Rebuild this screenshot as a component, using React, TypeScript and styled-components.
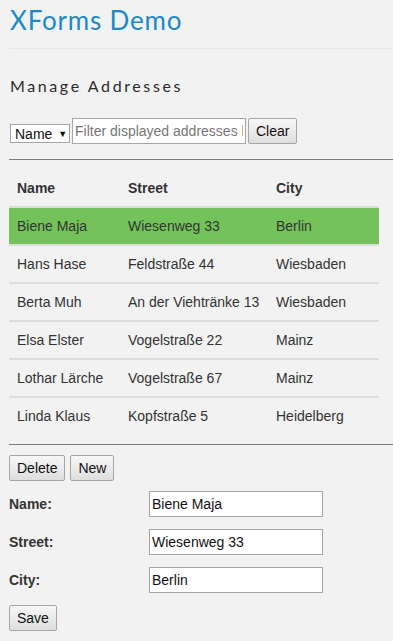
import React from 'react';
import styled, {createGlobalStyle} from 'styled-components';

const GlobalStyle = createGlobalStyle`
  body {
    margin: 0;
    background: #f2f2f2;
    font-family: "Liberation Sans", Arial, sans-serif;
    color: #333;
  }
`;

const Page = styled.div`
  padding: 0 0 0 9px;
`;

const Title = styled.h1`
  margin: 0 0 26px;
  padding: 4px 0 0 1px;
  height: 49px;
  box-sizing: border-box;
  font-family: "Lato", "Open Sans", sans-serif;
  font-weight: 400;
  font-size: 26px;
  letter-spacing: 0.8px;
  color: #1b88c9;
  border-bottom: 1px solid #e6e6e6;
`;

const Heading = styled.h2`
  margin: 0 0 21px 1px;
  font-family: "Lato", "Open Sans", sans-serif;
  font-weight: 400;
  font-size: 16px;
  letter-spacing: 2.6px;
  color: #2b2b2b;
  line-height: 22px;
`;

const FilterBar = styled.div`
  display: flex;
  align-items: center;
  gap: 2px;
  margin-left: 1px;
  height: 26px;
`;

const SelectBox = styled.div`
  display: flex;
  align-items: center;
  gap: 6px;
  height: 19px;
  box-sizing: border-box;
  width: 60px;
  padding: 0 4px;
  margin-top: 5px;
  background: #fff;
  border: 1px solid #a6a6a6;
  font-size: 14px;
  color: #111;
`;

const Arrow = styled.span`
  font-size: 9px;
`;

const TextInput = styled.input<{ $w: number }>`
  width: ${p => p.$w}px;
  height: 26px;
  box-sizing: border-box;
  border: 1px solid #a6a6a6;
  background: #fff;
  padding: 0 2px;
  font-family: "Liberation Sans", Arial, sans-serif;
  font-size: 14px;
  color: #111;
  outline: none;
  &::placeholder { color: #777; }
`;

const Button = styled.button`
  height: 26px;
  box-sizing: border-box;
  padding: 0 7px;
  border: 1px solid #a6a6a6;
  border-radius: 2px;
  background: linear-gradient(#f7f7f7, #dedede);
  font-family: "Liberation Sans", Arial, sans-serif;
  font-size: 14px;
  color: #111;
`;

const Rule = styled.hr`
  margin: 15px 0 10px;
  border: 0;
  border-top: 1px solid #7c7c7c;
`;

const Table = styled.table`
  width: 370px;
  border-collapse: collapse;
  font-size: 14px;
  color: #333;
`;

const Th = styled.th<{ $w?: number }>`
  text-align: left;
  font-weight: 700;
  height: 36px;
  padding: 0 8px;
  vertical-align: middle;
  width: ${p => (p.$w ? `${p.$w}px` : 'auto')};
`;

const Tr = styled.tr<{ $selected?: boolean }>`
  border-top: 2px solid #dcdcdc;
  background: ${p => (p.$selected ? '#73c35a' : 'transparent')};
`;

const Td = styled.td`
  height: 36px;
  padding: 0 8px;
  white-space: nowrap;
`;

const BottomRule = styled(Rule)`
  margin-top: 10px;
`;

const ButtonRow = styled.div`
  display: flex;
  gap: 5px;
`;

const FormRow = styled.div`
  display: flex;
  align-items: center;
  height: 26px;
  margin-top: 12px;
  &:first-of-type { margin-top: 10px; }
`;

const Label = styled.label`
  width: 140px;
  font-weight: 700;
  font-size: 14px;
  color: #333;
`;

const SaveRow = styled.div`
  margin-top: 12px;
`;

const rows = [
  ['Biene Maja', 'Wiesenweg 33', 'Berlin'],
  ['Hans Hase', 'Feldstraße 44', 'Wiesbaden'],
  ['Berta Muh', 'An der Viehtränke 13', 'Wiesbaden'],
  ['Elsa Elster', 'Vogelstraße 22', 'Mainz'],
  ['Lothar Lärche', 'Vogelstraße 67', 'Mainz'],
  ['Linda Klaus', 'Kopfstraße 5', 'Heidelberg'],
];

const fields = [
  ['Name:', 'Biene Maja'],
  ['Street:', 'Wiesenweg 33'],
  ['City:', 'Berlin'],
];

export default function App() {
  return (
    <Page>
      <GlobalStyle/>
      <Title>XForms Demo</Title>
      <Heading>Manage Addresses</Heading>
      <FilterBar>
        <SelectBox>Name <Arrow>▼</Arrow></SelectBox>
        <TextInput $w={174} placeholder="Filter displayed addresses by name"/>
        <Button>Clear</Button>
      </FilterBar>
      <Rule/>
      <Table>
        <thead>
          <tr>
            <Th $w={95}>Name</Th>
            <Th $w={132}>Street</Th>
            <Th>City</Th>
          </tr>
        </thead>
        <tbody>
          {rows.map((r, i) => (
            <Tr key={r[0]} $selected={i === 0}>
              <Td>{r[0]}</Td>
              <Td>{r[1]}</Td>
              <Td>{r[2]}</Td>
            </Tr>
          ))}
        </tbody>
      </Table>
      <BottomRule/>
      <ButtonRow>
        <Button>Delete</Button>
        <Button>New</Button>
      </ButtonRow>
      <div>
        {fields.map(([label, value]) => (
          <FormRow key={label}>
            <Label>{label}</Label>
            <TextInput $w={174} defaultValue={value}/>
          </FormRow>
        ))}
      </div>
      <SaveRow>
        <Button>Save</Button>
      </SaveRow>
    </Page>
  );
}
